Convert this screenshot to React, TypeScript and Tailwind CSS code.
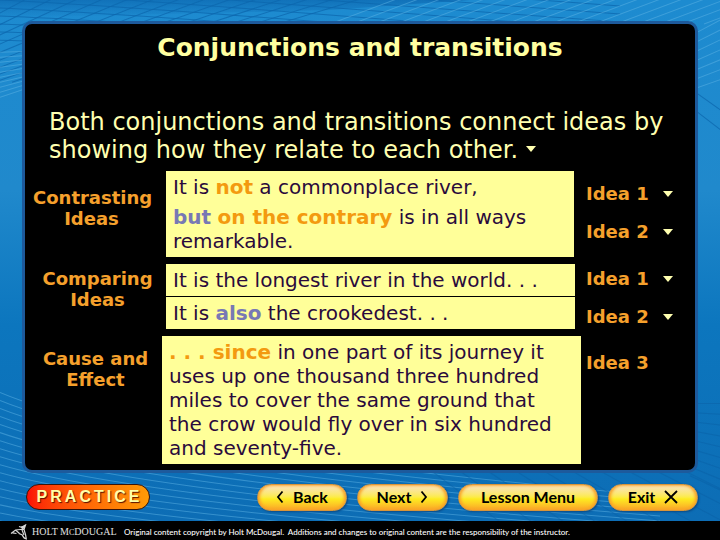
import type { ReactNode } from 'react';

type Row = {
    label: string;
    labelClass: string;
    boxClass: string;
    text: ReactNode;
    ideas: ReactNode;
};

const Triangle = ({ className = '' }: { className?: string }) => (
    <svg viewBox="0 0 10 6" className={`h-[6px] w-[10px] shrink-0 ${className}`} aria-hidden="true">
        <path d="M0 0h10L5 6z" fill="#ffffb0" />
    </svg>
);

const Idea = ({ name, arrow = true }: { name: string; arrow?: boolean }) => (
    <div className="flex items-center gap-[14px] text-[18px] leading-[22px] font-bold text-[#f5a02c]">
        <span className="whitespace-nowrap">{name}</span>
        {arrow && <Triangle />}
    </div>
);

const Orange = ({ children }: { children: ReactNode }) => (
    <b className="text-[#f39a10]">{children}</b>
);

const Blue = ({ children }: { children: ReactNode }) => (
    <b className="text-[#7878b4]">{children}</b>
);

const rows: Row[] = [
    {
        label: 'Contrasting Ideas',
        labelClass: 'w-[141px] pt-4 pl-2 pr-4',
        boxClass: 'mr-[7px]',
        text: (
            <div className="space-y-[6px] px-[7px] py-[4px]">
                <p>It is <Orange>not</Orange> a commonplace river,</p>
                <p><Blue>but</Blue> <Orange>on the contrary</Orange> is in all ways remarkable.</p>
            </div>
        ),
        ideas: (
            <div className="space-y-4 pt-3">
                <Idea name="Idea 1" />
                <Idea name="Idea 2" />
            </div>
        ),
    },
    {
        label: 'Comparing Ideas',
        labelClass: 'w-[141px] pt-1 pl-1',
        boxClass: 'mr-[6px]',
        text: (
            <div className="divide-y divide-black">
                <p className="px-[7px] py-[4px]">It is the longest river in the world. . .</p>
                <p className="px-[7px] py-[4px]">It is <Blue>also</Blue> the crookedest. . .</p>
            </div>
        ),
        ideas: (
            <div className="space-y-4 pt-1">
                <Idea name="Idea 1" />
                <Idea name="Idea 2" />
            </div>
        ),
    },
    {
        label: 'Cause and Effect',
        labelClass: 'w-[137px] pt-3 pl-1',
        boxClass: '',
        text: (
            <p className="py-[4px] pr-5 pl-[7px]">
                <Orange>. . . since</Orange> in one part of its journey it uses up one thousand three hundred
                miles to cover the same ground that the crow would fly over in six hundred and seventy-five.
            </p>
        ),
        ideas: (
            <div className="pt-4">
                <Idea name="Idea 3" arrow={false} />
            </div>
        ),
    },
];

const range = (n: number) => Array.from({ length: n }, (_, i) => i);

const Backdrop = () => (
    <svg
        viewBox="0 0 720 540"
        preserveAspectRatio="none"
        className="absolute inset-0 -z-10 h-full w-full"
        fill="none"
        aria-hidden="true"
    >
        <defs>
            <linearGradient id="sky" x1="0" y1="0" x2="0" y2="1">
                <stop offset="0" stopColor="#1d8bd0" />
                <stop offset="0.35" stopColor="#2089cc" />
                <stop offset="0.6" stopColor="#0c76be" />
                <stop offset="1" stopColor="#0d6cb4" />
            </linearGradient>
            <linearGradient id="shade" x1="0" y1="0" x2="0" y2="1">
                <stop offset="0" stopColor="#0c67b0" stopOpacity="0.7" />
                <stop offset="1" stopColor="#0c67b0" stopOpacity="0" />
            </linearGradient>
        </defs>
        <rect width="720" height="540" fill="url(#sky)" />
        <path d="M0 0h470L330 10 0 18z" fill="url(#shade)" />
        <g stroke="#0c67ae" strokeOpacity="0.75">
            {range(11).map((i) => (
                <path key={i} d={`M0 ${i * 8 - 40}Q180 ${i * 7 - 26} 620 ${i * 8 + 6}`} />
            ))}
            {range(16).map((i) => (
                <path key={i} d={`M${i * 26 - 20} -4L${i * 12 - 120} ${60 + i * 2}`} />
            ))}
            <path d="M690 88L724 112M690 106L724 132" />
        </g>
        <g stroke="#5db4e6" strokeOpacity="0.5">
            {range(18).map((i) => (
                <path key={i} d={`M${330 + i * 22} 24L${410 + i * 22} -6`} />
            ))}
            {range(7).map((i) => (
                <path key={i} d={`M690 ${36 + i * 9}L724 ${18 + i * 10}`} />
            ))}
            {range(10).map((i) => (
                <path key={i} d={`M0 ${52 + i * 5}L30 ${51 + i * 4}`} />
            ))}
            {range(18).map((i) => (
                <path key={i} d={`M0 ${391 + i * 8}Q140 ${450 + i * 6} 660 ${494 + i * 5}`} />
            ))}
        </g>
        <g stroke="#0a5fa6" strokeOpacity="0.5">
            {range(9).map((i) => (
                <path key={i} d={`M690 ${402 + i * 9}L724 ${402 + i * 11}`} />
            ))}
            {range(10).map((i) => (
                <path key={i} d={`M${430 + i * 28} 468L${500 + i * 32} 520`} />
            ))}
        </g>
    </svg>
);

const navClass =
    'flex h-[27px] items-center justify-center gap-[9px] rounded-full border border-[#d9953a] bg-linear-to-b from-[#fbe0bc] via-[#fdec20] via-55% to-[#f9a428] font-["Lato",sans-serif] text-[16px] font-bold text-black shadow-[1px_1px_2px_#0b4a86,inset_2px_0_3px_#f9a428,inset_-2px_0_3px_#f9a428]';

const Chevron = ({ d }: { d: string }) => (
    <svg viewBox="0 0 8 14" className="h-[14px] w-[8px]" fill="none" stroke="black" strokeWidth="1.8" aria-hidden="true">
        <path d={d} />
    </svg>
);

const HoltLogo = () => (
    <svg viewBox="0 0 18 16" className="h-[16px] w-[18px]" fill="none" stroke="#d8d8d8" strokeWidth="1.2" aria-hidden="true">
        <path d="M9 2.500l2.500 .8L15.500 1l-1.500 4.500c1 3 2 6 2.300 9.500-2-.5-3.300-2-4-4L9 9.500" />
        <path d="M1 9.500L5.500 6l5-.5 3.500 0M2.500 8.800L6.500 9.500M5.500 6l4 3.500M12 6l2 5" />
        <path d="M11 2.500l4.500-1L13.500 5l-1.500 1z" fill="#d8d8d8" stroke="none" />
    </svg>
);

const App = () => (
    <div className='relative isolate flex min-h-screen flex-col font-["DejaVu_Sans",Verdana,sans-serif]'>
        <Backdrop />
        <main className="mx-[22px] mt-[21px] flex-1 rounded-[10px] border-3 border-[#1d5a9c] bg-black pb-[6px]">
            <h1 className="pt-[9px] text-center text-[25px] leading-[30px] font-bold text-[#ffffa0]">
                Conjunctions and transitions
            </h1>
            <p className="mt-[45px] px-6 text-[24px] leading-[28px] text-[#ffffb0]">
                Both conjunctions and transitions connect ideas by showing how they relate to each other.
                <Triangle className="mb-1 ml-2 inline-block" />
            </p>
            <div className="mt-[7px] space-y-[7px]">
                {rows.map((row) => (
                    <section key={row.label} className="flex">
                        <h2 className={`shrink-0 text-center text-[18px] leading-[21px] font-bold text-[#f5a02c] ${row.labelClass}`}>
                            {row.label}
                        </h2>
                        <div className={`flex-1 bg-[#ffff99] text-[20px] leading-[24px] text-[#2a0a3c] ${row.boxClass}`}>
                            {row.text}
                        </div>
                        <div className="w-[114px] shrink-0 pl-[5px]">{row.ideas}</div>
                    </section>
                ))}
            </div>
        </main>
        <nav className="flex h-[48px] items-center gap-[10px] pr-[22px] pl-[26px]">
            <button className='mr-auto h-[26px] w-[124px] rounded-full border border-[#3a1408] bg-linear-to-r from-[#fb0a06] to-[#ff9a06] pl-[3px] font-["Liberation_Sans",sans-serif] text-[16px] leading-none font-black tracking-[3px] text-[#ffffa8] [text-shadow:1px_1px_1px_#5a1000]'>
                PRACTICE
            </button>
            <button className={`w-[90px] ${navClass}`}>
                <Chevron d="M6.500 1.500L2 7l4.500 5.500" />
                Back
            </button>
            <button className={`w-[91px] ${navClass}`}>
                Next
                <Chevron d="M1.500 1.500L6 7l-4.500 5.500" />
            </button>
            <button className={`w-[140px] ${navClass}`}>Lesson Menu</button>
            <button className={`w-[90px] ${navClass}`}>
                Exit
                <svg viewBox="0 0 14 14" className="h-[14px] w-[14px]" stroke="black" strokeWidth="1.8" aria-hidden="true">
                    <path d="M1 1l12 12M13 1L1 13" />
                </svg>
            </button>
        </nav>
        <footer className="flex h-[21px] items-center bg-black pl-[10px] text-white">
            <HoltLogo />
            <span className='ml-1 w-[81px] font-["Liberation_Serif",serif] text-[10px] whitespace-nowrap text-[#e0e0e0]'>
                HOLT M<small className="text-[8px]">C</small>DOUGAL
            </span>
            <p className='ml-[11px] font-["Lato",sans-serif] text-[8px] font-medium whitespace-pre'>
                Original content copyright by Holt McDougal.  Additions and changes to original content are the responsibility of the instructor.
            </p>
        </footer>
    </div>
);

export default App;
